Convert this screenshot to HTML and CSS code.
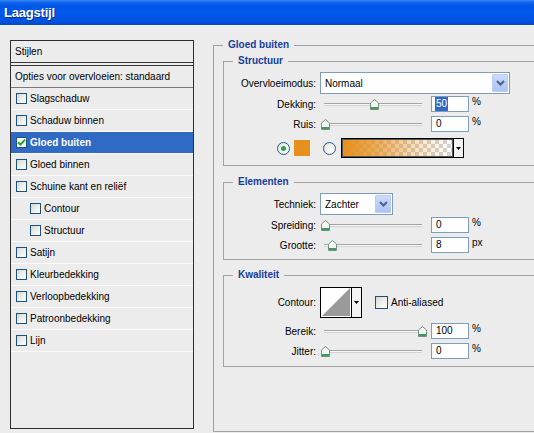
FILE: index.html
```html
<!DOCTYPE html>
<html lang="nl">
<head>
<meta charset="utf-8">
<title>Laagstijl</title>
<link rel="stylesheet" href="styles.css">
</head>
<body>
<div class="titlebar"><span class="title">Laagstijl</span></div>
<div class="content">
  <div class="styles-list">
    <div class="list-head">Stijlen</div>
    <div class="list-opts">Opties voor overvloeien: standaard</div>
    <div class="list-row"><span class="cb"></span>Slagschaduw</div>
    <div class="list-row"><span class="cb"></span>Schaduw binnen</div>
    <div class="list-row selected"><span class="cb checked"><svg width="9" height="9" viewBox="0 0 9 9"><path d="M1 4.2 L3.4 6.6 L8 1.6" fill="none" stroke="#21a121" stroke-width="2"/></svg></span>Gloed buiten</div>
    <div class="list-row"><span class="cb"></span>Gloed binnen</div>
    <div class="list-row"><span class="cb"></span>Schuine kant en reliëf</div>
    <div class="list-row sub"><span class="cb"></span>Contour</div>
    <div class="list-row sub"><span class="cb"></span>Structuur</div>
    <div class="list-row"><span class="cb"></span>Satijn</div>
    <div class="list-row"><span class="cb"></span>Kleurbedekking</div>
    <div class="list-row"><span class="cb"></span>Verloopbedekking</div>
    <div class="list-row"><span class="cb"></span>Patroonbedekking</div>
    <div class="list-row"><span class="cb"></span>Lijn</div>
  </div>

  <div class="settings">
    <div class="group outer">
      <span class="legend">Gloed buiten</span>

      <div class="group structuur">
        <span class="legend">Structuur</span>
        <div class="row select-row">
          <span class="label">Overvloeimodus:</span>
          <div class="select wide"><span class="select-text">Normaal</span><span class="select-btn"><svg width="9" height="6" viewBox="0 0 9 6"><path d="M1 1 L4.5 4.5 L8 1" fill="none" stroke="#4d6185" stroke-width="2"/></svg></span></div>
        </div>
        <div class="row slider-row first">
          <span class="label">Dekking:</span>
          <div class="slider"><div class="track"></div><span class="thumb" style="left:50px"><svg width="9" height="11" viewBox="0 0 9 11"><path d="M0.5 4 L4.5 0.5 L8.5 4 L8.5 10.5 L0.5 10.5 Z" fill="#f4f8f4" stroke="#76907f"/><rect x="1" y="8" width="7" height="2" fill="#3f9a62"/></svg></span></div>
          <span class="field"><span class="sel">50</span></span><span class="unit">%</span>
        </div>
        <div class="row slider-row">
          <span class="label">Ruis:</span>
          <div class="slider"><div class="track"></div><span class="thumb" style="left:1px"><svg width="9" height="11" viewBox="0 0 9 11"><path d="M0.5 4 L4.5 0.5 L8.5 4 L8.5 10.5 L0.5 10.5 Z" fill="#f4f8f4" stroke="#76907f"/><rect x="1" y="8" width="7" height="2" fill="#3f9a62"/></svg></span></div>
          <span class="field">0</span><span class="unit">%</span>
        </div>
        <div class="row color-row">
          <span class="radio on"><span class="dot"></span></span>
          <span class="swatch"></span>
          <span class="radio"></span>
          <span class="gradient-pick"><span class="gradient"></span><span class="mini-btn"><svg width="5" height="3" viewBox="0 0 5 3"><path d="M0 0 H5 L2.5 3 Z" fill="#000"/></svg></span></span>
        </div>
      </div>

      <div class="group elementen">
        <span class="legend">Elementen</span>
        <div class="row select-row">
          <span class="label">Techniek:</span>
          <div class="select narrow"><span class="select-text">Zachter</span><span class="select-btn"><svg width="9" height="6" viewBox="0 0 9 6"><path d="M1 1 L4.5 4.5 L8 1" fill="none" stroke="#4d6185" stroke-width="2"/></svg></span></div>
        </div>
        <div class="row slider-row first">
          <span class="label">Spreiding:</span>
          <div class="slider"><div class="track"></div><span class="thumb" style="left:1px"><svg width="9" height="11" viewBox="0 0 9 11"><path d="M0.5 4 L4.5 0.5 L8.5 4 L8.5 10.5 L0.5 10.5 Z" fill="#f4f8f4" stroke="#76907f"/><rect x="1" y="8" width="7" height="2" fill="#3f9a62"/></svg></span></div>
          <span class="field">0</span><span class="unit">%</span>
        </div>
        <div class="row slider-row">
          <span class="label">Grootte:</span>
          <div class="slider"><div class="track"></div><span class="thumb" style="left:8px"><svg width="9" height="11" viewBox="0 0 9 11"><path d="M0.5 4 L4.5 0.5 L8.5 4 L8.5 10.5 L0.5 10.5 Z" fill="#f4f8f4" stroke="#76907f"/><rect x="1" y="8" width="7" height="2" fill="#3f9a62"/></svg></span></div>
          <span class="field">8</span><span class="unit">px</span>
        </div>
      </div>

      <div class="group kwaliteit">
        <span class="legend">Kwaliteit</span>
        <div class="row contour-row">
          <span class="label">Contour:</span>
          <span class="contour-pick"><span class="contour-preview"><svg width="30" height="29" viewBox="0 0 30 29"><polygon points="1,28 29,0 29,28" fill="#9a9a9a"/></svg></span><span class="mini-btn"><svg width="5" height="3" viewBox="0 0 5 3"><path d="M0 0 H5 L2.5 3 Z" fill="#000"/></svg></span></span>
          <span class="cb big"></span><span class="cb-label">Anti-aliased</span>
        </div>
        <div class="row slider-row first">
          <span class="label">Bereik:</span>
          <div class="slider"><div class="track"></div><span class="thumb" style="left:98px"><svg width="9" height="11" viewBox="0 0 9 11"><path d="M0.5 4 L4.5 0.5 L8.5 4 L8.5 10.5 L0.5 10.5 Z" fill="#f4f8f4" stroke="#76907f"/><rect x="1" y="8" width="7" height="2" fill="#3f9a62"/></svg></span></div>
          <span class="field">100</span><span class="unit">%</span>
        </div>
        <div class="row slider-row">
          <span class="label">Jitter:</span>
          <div class="slider"><div class="track"></div><span class="thumb" style="left:1px"><svg width="9" height="11" viewBox="0 0 9 11"><path d="M0.5 4 L4.5 0.5 L8.5 4 L8.5 10.5 L0.5 10.5 Z" fill="#f4f8f4" stroke="#76907f"/><rect x="1" y="8" width="7" height="2" fill="#3f9a62"/></svg></span></div>
          <span class="field">0</span><span class="unit">%</span>
        </div>
      </div>
    </div>
  </div>
</div>
</body>
</html>
```

FILE: styles.css
```css
* { box-sizing: border-box; }
html, body { margin: 0; padding: 0; }
body {
  width: 534px;
  height: 433px;
  overflow: hidden;
  background: #ececec;
  font-family: "Liberation Sans", Arial, sans-serif;
  font-size: 10px;
  color: #000;
}

/* title bar */
.titlebar {
  height: 26px;
  border-bottom: 1px solid #f6f6f6;
  background: linear-gradient(to bottom, #3b8cf7 0, #1466ee 2px, #0056e6 6px, #0058ec 50%, #0052e0 85%, #0046cc 100%);
  display: flex;
  align-items: center;
  padding-left: 4px;
}
.title {
  color: #fff;
  font-weight: bold;
  font-size: 13px;
  letter-spacing: -0.2px;
  text-shadow: 1px 1px 0 #0a2a8c;
}

.content {
  display: flex;
  gap: 19px;
  padding: 14px 0 0 10px;
}

/* styles list */
.styles-list {
  flex: none;
  width: 184px;
  height: 389px;
  border: 1px solid #2e2e2e;
  background: #ececec;
}
.list-head {
  height: 22px;
  line-height: 21px;
  padding-left: 4px;
  border-bottom: 1px solid #3a3a3a;
}
.list-opts {
  margin-top: 2px;
  height: 23px;
  line-height: 21px;
  padding-left: 4px;
  border-top: 1px solid #3a3a3a;
  border-bottom: 1px solid #7a7a7a;
}
.list-row {
  height: 22px;
  display: flex;
  align-items: center;
  padding: 0 0 1px 5px;
  border-bottom: 1px solid #fbfbfb;
}
.list-row.sub { padding-left: 19px; }
.list-row.selected {
  background: #316ac5;
  color: #fff;
  font-weight: bold;
}
.cb {
  flex: none;
  width: 11px;
  height: 11px;
  margin-right: 3px;
  border: 1px solid #1c5180;
  background: linear-gradient(135deg, #d6d6d0 0%, #f0f0ec 55%, #fff 100%);
  display: flex;
  align-items: center;
  justify-content: center;
}
.cb.checked { background: #fff; }
.cb.big { width: 13px; height: 13px; margin: 0 3px 0 13px; }

/* settings */
.settings { flex: none; width: 340px; }
.group {
  position: relative;
  border: 1px solid #a2a2a2;
}
.legend {
  position: absolute;
  top: -7px;
  left: 9px;
  padding: 0 5px;
  line-height: 12px;
  background: #ececec;
  color: #163e9c;
  font-weight: bold;
}
.outer {
  margin-top: 5px;
  height: 387px;
  padding: 15px 0 0 9px;
}
.outer > .group { width: 320px; }
.structuur { height: 105px; padding-top: 10px; }
.elementen { height: 78px; margin-top: 16px; padding-top: 10px; }
.kwaliteit { height: 92px; margin-top: 15px; padding-top: 11px; }

.row { display: flex; align-items: center; }
.label {
  flex: none;
  width: 92px;
  margin-right: 4px;
  text-align: right;
}
.select-row { height: 22px; }
.slider-row { height: 16px; margin-top: 4px; }
.slider-row.first { margin-top: 2px; }
.kwaliteit .slider-row.first { margin-top: 5px; }

.select {
  height: 22px;
  border: 1px solid #7f9db9;
  background: #fff;
  display: flex;
  align-items: stretch;
}
.select.wide { width: 190px; }
.select.narrow { width: 73px; }
.select-text { flex: 1; padding-left: 4px; display: flex; align-items: center; }
.select-btn {
  flex: none;
  width: 16px;
  margin: 1px;
  border: 1px solid #bacdf6;
  border-radius: 1px;
  background: linear-gradient(to bottom, #cddbfc 0%, #b7cbf8 60%, #aec4f4 100%);
  display: flex;
  align-items: center;
  justify-content: center;
}

.slider {
  position: relative;
  flex: none;
  width: 111px;
  height: 16px;
}
.track {
  margin: 7px 9px 0 4px;
  height: 3px;
  border-top: 1px solid #a3a3a3;
  border-bottom: 1px solid #d2d2d2;
  background: #f8f8f8;
}
.thumb {
  position: absolute;
  top: 3px;
  width: 9px;
  height: 11px;
  display: block;
}
.thumb svg { display: block; }

.field {
  flex: none;
  width: 38px;
  height: 16px;
  border: 1px solid #7f9db9;
  background: #fff;
  padding-left: 4px;
  line-height: 14px;
}
.sel { background: #316ac5; color: #fff; display: inline-block; line-height: 14px; padding: 0 1px; margin-left: -1px; }
.unit {
  align-self: flex-start;
  margin-left: 3px;
  line-height: 12px;
}

.color-row { height: 20px; margin-top: 6px; padding-left: 53px; }
.radio {
  flex: none;
  width: 13px;
  height: 13px;
  border-radius: 50%;
  border: 1px solid #2a5a8a;
  background: radial-gradient(circle at 65% 65%, #fff 0, #f0f0ec 50%, #d8d8d2 100%);
  display: flex;
  align-items: center;
  justify-content: center;
  margin-right: 4px;
}
.radio + .gradient-pick { margin-left: 1px; }
.dot {
  width: 5px;
  height: 5px;
  border-radius: 50%;
  background: #2fa24a;
}
.swatch {
  flex: none;
  width: 16px;
  height: 16px;
  background: #e6901e;
  margin-right: 13px;
}
.gradient-pick {
  flex: none;
  width: 123px;
  height: 20px;
  border: 1px solid #000;
  display: flex;
  background: #fff;
}
.gradient {
  flex: 1;
  border: 1px solid #555;
  background-image:
    linear-gradient(90deg, rgba(230,144,30,1) 0%, rgba(230,144,30,0.75) 30%, rgba(230,144,30,0.25) 70%, rgba(230,144,30,0) 100%),
    conic-gradient(#d4d4d4 25%, #fff 0 50%, #d4d4d4 0 75%, #fff 0);
  background-size: 100% 100%, 8px 8px;
}
.mini-btn {
  flex: none;
  width: 10px;
  border-left: 1px solid #000;
  background: #f4f4f4;
  display: flex;
  align-items: center;
  justify-content: center;
}

.contour-row { height: 31px; }
.contour-pick {
  flex: none;
  width: 42px;
  height: 31px;
  border: 1px solid #000;
  display: flex;
  background: #fff;
}
.contour-preview { flex: none; width: 30px; display: block; }
.contour-preview svg { display: block; }
.contour-pick .mini-btn { width: 10px; }
.cb-label { margin-left: 0; }
```
